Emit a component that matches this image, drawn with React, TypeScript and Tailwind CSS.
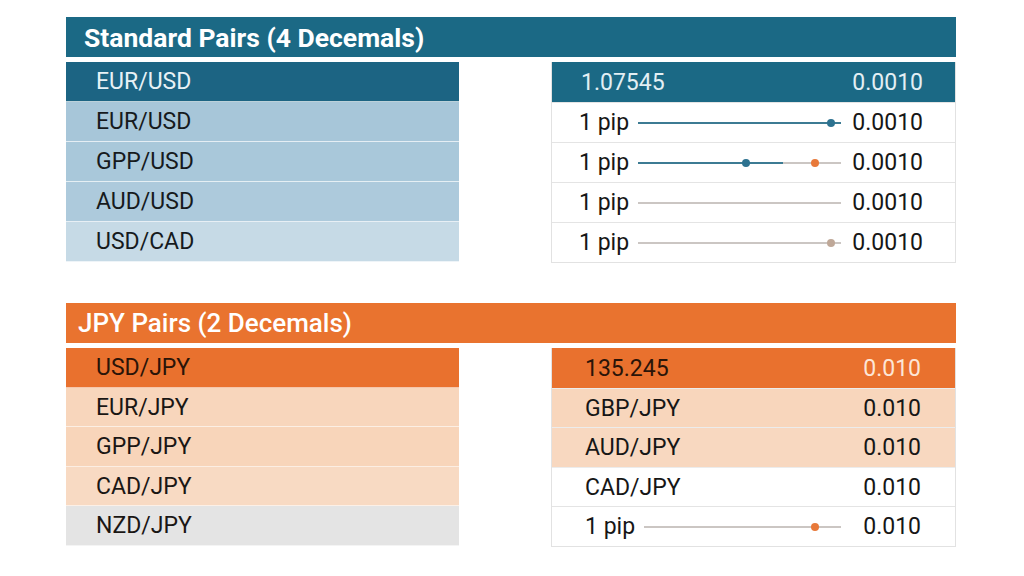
const leftStd = [
  { label: "EUR/USD", cls: "bg-[#1c6483] text-[#e8f2f6]" },
  { label: "EUR/USD", cls: "bg-[#a7c6d9] text-[#161a1d]" },
  { label: "GPP/USD", cls: "bg-[#a9c8da] text-[#161a1d]" },
  { label: "AUD/USD", cls: "bg-[#adcadc] text-[#161a1d]" },
  { label: "USD/CAD", cls: "bg-[#c6dae6] text-[#161a1d]" },
];

const leftJpy = [
  { label: "USD/JPY", cls: "bg-[#e9712e] text-[#2a1408]" },
  { label: "EUR/JPY", cls: "bg-[#f8d6bc] text-[#1a1614]" },
  { label: "GPP/JPY", cls: "bg-[#f8d5ba] text-[#1a1614]" },
  { label: "CAD/JPY", cls: "bg-[#f8dac3] text-[#1a1614]" },
  { label: "NZD/JPY", cls: "bg-[#e4e4e4] text-[#1a1614]" },
];

type Dot = { at: number; color: string };

// dot positions are px along the track
const PipSlider = ({
  width,
  fill,
  dots,
  split,
}: {
  width: number;
  fill?: string;
  dots: Dot[];
  split?: number;
}) => {
  return (
    <svg width={width} height={12} viewBox={`0 0 ${width} 12`} className="block">
      <line x1={0} y1={6} x2={width} y2={6} stroke="#cbc6c3" strokeWidth={2} />
      {fill && (
        <line x1={0} y1={6} x2={split ?? width} y2={6} stroke={fill} strokeWidth={2} />
      )}
      {dots.map((d, i) => (
        <circle key={i} cx={d.at} cy={6} r={4} fill={d.color} />
      ))}
    </svg>
  );
};

const SectionHeader = ({ title, cls }: { title: string; cls: string }) => (
  <div className={`h-[40px] flex items-center ${cls}`}>{title}</div>
);

export default function App() {
  return (
    <div
      className="w-[1024px] h-[576px] bg-white pl-[66px] pt-[17px]"
      style={{ fontFamily: "Roboto, 'Liberation Sans', sans-serif" }}
    >
      <div className="w-[890px] flex flex-col">
        {/* Standard pairs */}
        <SectionHeader
          title="Standard Pairs (4 Decemals)"
          cls="bg-[#1b6985] text-white text-[26.5px] font-bold pl-[18px] pt-[1px]"
        />
        <div className="mt-[5px] flex gap-[92px]">
          <div className="w-[393px] flex flex-col">
            {leftStd.map((r, i) => (
              <div
                key={i}
                className={`h-[40px] flex items-center pl-[30px] pt-[2px] text-[23px] border-b border-white/70 ${r.cls}`}
              >
                {r.label}
              </div>
            ))}
          </div>
          <div className="w-[405px] flex flex-col border border-[#e2e2e2] border-t-0">
            <div className="h-[40px] flex items-center justify-between pl-[29px] pr-[32px] pt-[2px] bg-[#1b6985] text-[#e3eff4] text-[23px]">
              <span>1.07545</span>
              <span>0.0010</span>
            </div>
            {[
              { fill: "#3c7b93", split: 203, dots: [{ at: 193, color: "#2d7290" }] },
              {
                fill: "#3c7b93",
                split: 145,
                dots: [
                  { at: 108, color: "#2d7290" },
                  { at: 177, color: "#e8793a" },
                ],
              },
              { dots: [] },
              { dots: [{ at: 193, color: "#bfa898" }] },
            ].map((s, i) => (
              <div
                key={i}
                className="h-[40px] flex items-center pl-[27px] pr-[32px] text-[23px] text-[#161616] border-t border-[#e4e4e4]"
              >
                <span className="w-[59px] shrink-0 pt-[2px]">1 pip</span>
                <PipSlider width={203} fill={s.fill} split={s.split} dots={s.dots} />
                <span className="ml-auto pt-[2px]">0.0010</span>
              </div>
            ))}
          </div>
        </div>

        {/* JPY pairs */}
        <div className="mt-[40px]">
          <SectionHeader
            title="JPY Pairs (2 Decemals)"
            cls="bg-[#e9732f] text-white text-[26px] font-medium pl-[12px] pt-[1px]"
          />
        </div>
        <div className="mt-[5px] flex gap-[92px]">
          <div className="w-[393px] flex flex-col">
            {leftJpy.map((r, i) => (
              <div
                key={i}
                className={`h-[39.6px] flex items-center pl-[30px] pt-[2px] text-[23px] border-b border-white/60 ${r.cls}`}
              >
                {r.label}
              </div>
            ))}
          </div>
          <div className="w-[405px] flex flex-col border border-[#e2e2e2] border-t-0">
            <div className="h-[39.6px] flex items-center justify-between pl-[33px] pr-[34px] pt-[2px] bg-[#e9712e] text-[23px]">
              <span className="text-[#2a1408]">135.245</span>
              <span className="text-[#fde6d6]">0.010</span>
            </div>
            {[
              { label: "GBP/JPY", cls: "bg-[#f8d6bc]" },
              { label: "AUD/JPY", cls: "bg-[#f8d8c0]" },
              { label: "CAD/JPY", cls: "bg-white" },
            ].map((r, i) => (
              <div
                key={i}
                className={`h-[39.6px] flex items-center justify-between pl-[33px] pr-[34px] pt-[2px] text-[23px] text-[#161616] border-t border-[#ececec] ${r.cls}`}
              >
                <span>{r.label}</span>
                <span>0.010</span>
              </div>
            ))}
            <div className="h-[39.6px] flex items-center pl-[33px] pr-[34px] text-[23px] text-[#161616] border-t border-[#e4e4e4]">
              <span className="w-[59px] shrink-0 pt-[2px]">1 pip</span>
              <PipSlider width={197} dots={[{ at: 171, color: "#e8793a" }]} />
              <span className="ml-auto pt-[2px]">0.010</span>
            </div>
          </div>
        </div>
      </div>
    </div>
  );
}
